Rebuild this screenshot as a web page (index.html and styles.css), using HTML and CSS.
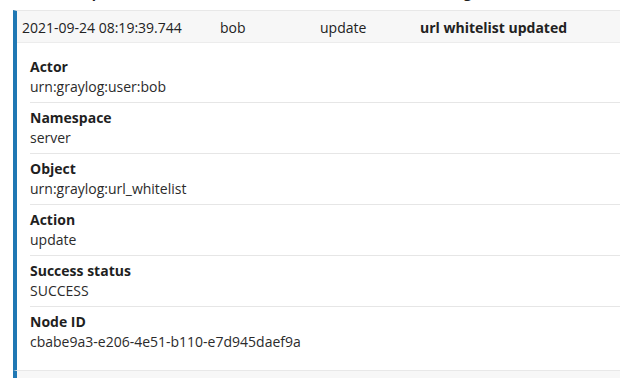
FILE: index.html
```html
<!DOCTYPE html>
<html>
<head>
<meta charset="utf-8">
<link rel="stylesheet" href="styles.css">
</head>
<body>
<div class="table">
  <div class="row head">
    <div class="cell c1">Timestamp</div>
    <div class="cell c2">Actor</div>
    <div class="cell c3">Action</div>
    <div class="cell c4">Message</div>
  </div>
  <div class="group expanded">
    <div class="row entry">
      <div class="cell c1">2021-09-24 08:19:39.744</div>
      <div class="cell c2">bob</div>
      <div class="cell c3">update</div>
      <div class="cell c4 strong">url whitelist updated</div>
    </div>
    <dl class="details">
      <div class="item"><dt>Actor</dt><dd>urn:graylog:user:bob</dd></div>
      <div class="item"><dt>Namespace</dt><dd>server</dd></div>
      <div class="item"><dt>Object</dt><dd>urn:graylog:url_whitelist</dd></div>
      <div class="item"><dt>Action</dt><dd>update</dd></div>
      <div class="item"><dt>Success status</dt><dd>SUCCESS</dd></div>
      <div class="item"><dt>Node ID</dt><dd>cbabe9a3-e206-4e51-b110-e7d945daef9a</dd></div>
    </dl>
  </div>
  <div class="group expanded">
    <div class="row entry">
      <div class="cell c1">&nbsp;</div>
    </div>
  </div>
</div>
</body>
</html>
```
FILE: styles.css
```css
html, body {
  margin: 0;
  padding: 0;
  background: #fff;
  overflow: hidden;
}
body {
  font-family: "Open Sans", "Noto Sans", sans-serif;
  font-size: 14px;
  line-height: 20px;
  color: #1f1f1f;
}
.table {
  margin-top: -22px;
  padding-left: 13px;
}
.row {
  display: grid;
  grid-template-columns: 198px 100px 100px 1fr;
}
.cell {
  padding: 5px 5px;
  white-space: nowrap;
}
.head {
  height: 32px;
  box-sizing: border-box;
  padding-left: 4px;
  font-weight: 700;
}
.head .cell {
  padding-top: 5px;
}
.group {
  border-left: 4px solid #1f78b4;
  border-top: 1px solid #e8e8e8;
}
.entry {
  background: #f7f7f7;
  border-bottom: 1px solid #ececec;
  height: 32px;
  box-sizing: border-box;
}
.entry .cell {
  padding-top: 7px;
  color: #222;
}
.strong {
  font-weight: 700;
}
.details {
  margin: 0;
  padding: 9px 0 13px 13px;
}
.item {
  padding: 5px 0 5px;
  border-bottom: 1px solid #e6e6e6;
}
.item:last-child {
  border-bottom: none;
}
.details dt {
  font-weight: 700;
  color: #1f1f1f;
}
.details dd {
  margin: 0;
  color: #2b2b2b;
}
```
